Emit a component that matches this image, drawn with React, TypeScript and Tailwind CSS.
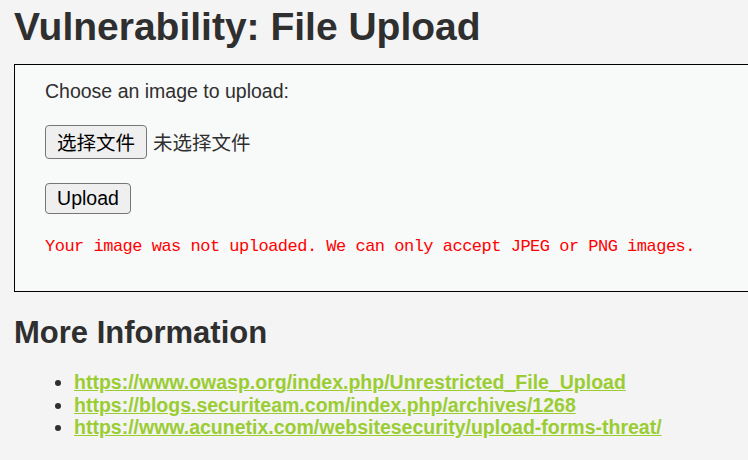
import React from "react";

export default function App() {
  const links = [
    "https://www.owasp.org/index.php/Unrestricted_File_Upload",
    "https://blogs.securiteam.com/index.php/archives/1268",
    "https://www.acunetix.com/websitesecurity/upload-forms-threat/",
  ];
  return (
    <div
      className="w-[748px] h-[460px] overflow-hidden bg-[#f4f4f4] text-[#2f2f2f]"
      style={{ fontFamily: '"Liberation Sans", Arial, "Noto Sans CJK SC", sans-serif' }}
    >
      <div className="pl-[14px]">
        <h1 className="mt-[7px] text-[39px] font-bold leading-none whitespace-nowrap">
          Vulnerability: File Upload
        </h1>
        <div className="mt-[18px] w-[800px] border border-black bg-[#f8f9f9] pl-[30px] pt-[15px] pb-[34px]">
          <div className="text-[19.5px] leading-[22px]">Choose an image to upload:</div>
          <div className="mt-[23px] flex items-center h-[34px]">
            <button
              className="h-[34px] w-[102px] rounded-[4px] border border-[#767676] bg-[#efefef] text-[19.5px] text-black flex items-center justify-center"
              style={{ fontFamily: '"Noto Sans CJK SC", sans-serif' }}
            >
              选择文件
            </button>
            <span
              className="ml-[6px] text-[19.5px]"
              style={{ fontFamily: '"Noto Sans CJK SC", sans-serif' }}
            >
              未选择文件
            </span>
          </div>
          <button className="mt-[24px] h-[31px] w-[86px] rounded-[4px] border border-[#767676] bg-[#efefef] text-[19.5px] text-black flex items-center justify-center">
            Upload
          </button>
          <pre
            className="mt-[23px] text-[17px] leading-[20px] tracking-[-0.5px] text-[#ff0000]"
            style={{ fontFamily: '"Liberation Mono", "Courier New", monospace' }}
          >
            Your image was not uploaded. We can only accept JPEG or PNG images.
          </pre>
        </div>
        <h2 className="mt-[25px] text-[31px] font-bold leading-none">More Information</h2>
        <ul className="mt-[23px] ml-[60px] list-disc text-[19.5px] font-bold leading-[22.5px]">
          {links.map((l) => (
            <li key={l}>
              <a href="#" className="text-[#9acd32] underline">
                {l}
              </a>
            </li>
          ))}
        </ul>
      </div>
    </div>
  );
}
